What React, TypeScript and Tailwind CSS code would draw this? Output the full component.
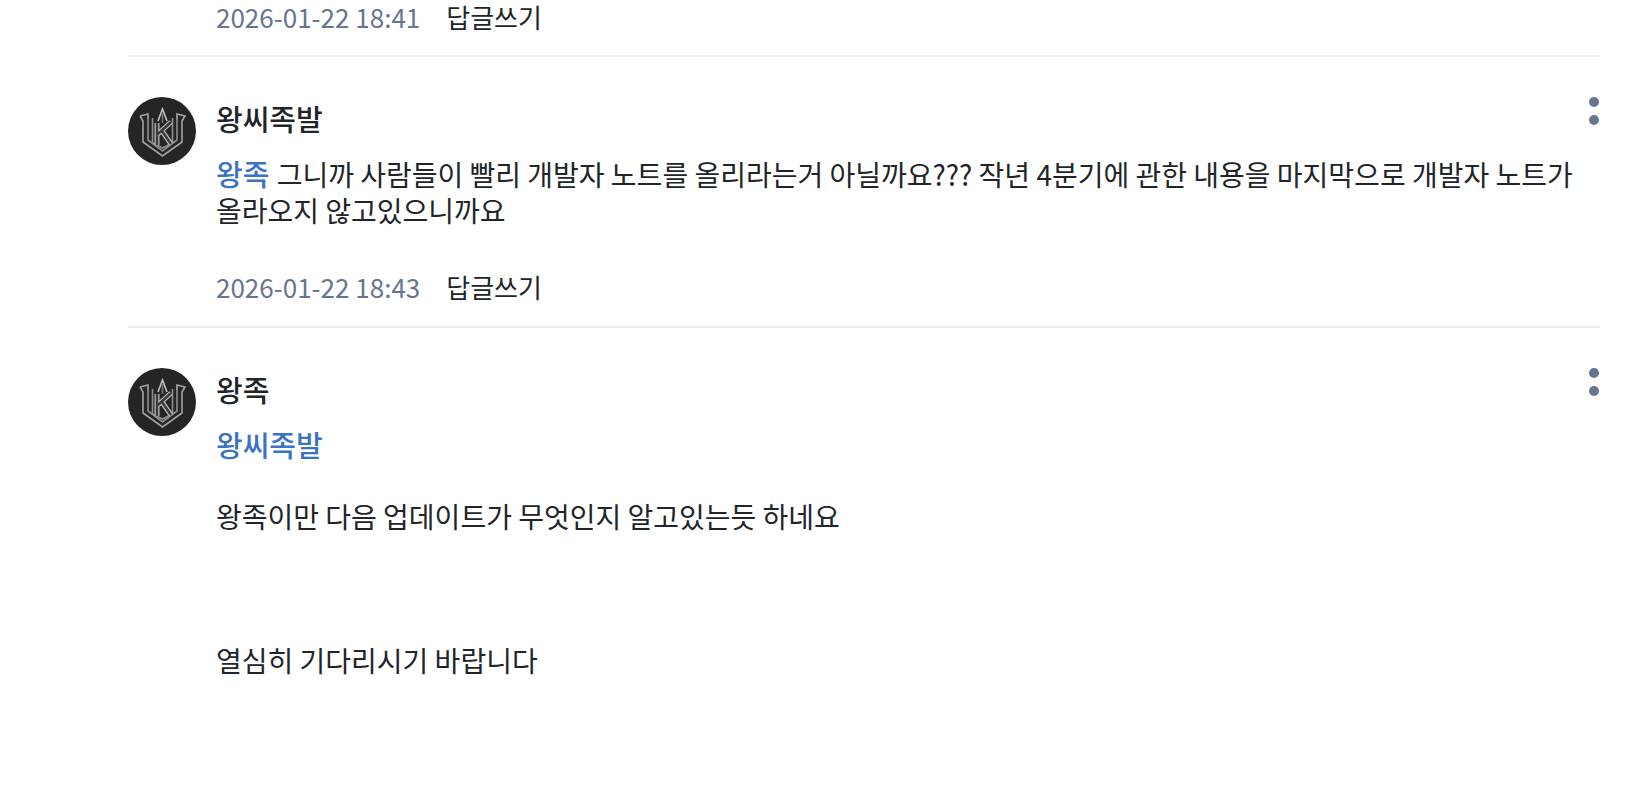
const K_STROKES = "M29 26 V48 M30 37 L43 25 M34 34 L43 47";

const Avatar = () => (
  <div className="flex h-[68px] w-[68px] shrink-0 items-center justify-center rounded-full bg-[#262525]">
    <svg viewBox="0 0 68 68" className="h-[68px] w-[68px]" fill="none" stroke="#a3a3a3" strokeWidth="1.6" aria-hidden>
      <path d="M12 19 L20 17 V22 M12 19 L15 24 V45 L34.5 59 L54 45 V24 L57 19 L49 17 V22" />
      <path d="M20 20 V43 L34.5 54 L49 43 V20" stroke="#8f8f8f" />
      <path d="M24.5 21 V46 L34.5 51 L44.5 46 V21" stroke="#8f8f8f" />
      <path d="M30 24 L34.5 12 L39 24" stroke="#c4c4c4" />
      <path d="M34.5 16 V26" stroke="#777777" />
      <path d={K_STROKES} stroke="#b8b8b8" strokeWidth="5" />
      <path d={K_STROKES} stroke="#3a3a3a" strokeWidth="2.4" />
    </svg>
  </div>
);

const Kebab = () => (
  <div className="flex flex-col gap-[8px] pr-[1px]">
    <span className="h-[10px] w-[10px] rounded-full bg-[#667591]" />
    <span className="h-[10px] w-[10px] rounded-full bg-[#667591]" />
  </div>
);

const Mention = ({ children }: { children: string }) => (
  <span className="mr-[1px] text-[29px] font-medium leading-none text-[#3a73c4]">{children}</span>
);

function Meta({ date }: { date: string }) {
  return (
    <div className="flex items-center gap-[26px] text-[26px] leading-[34px]">
      <span className="text-[#667591]">{date}</span>
      <span className="text-[#212529]">답글쓰기</span>
    </div>
  );
}

export default function App() {
  return (
    <div className="h-[810px] w-[1640px] overflow-hidden bg-white pl-[128px] pr-[40px] font-['Noto_Sans_CJK_KR','Noto_Sans',sans-serif] text-[#212529]">
      <div className="h-[57px] border-b-2 border-[#eeeeee] pl-[88px]">
        <Meta date="2026-01-22 18:41" />
      </div>

      <div className="flex h-[271px] gap-[20px] border-b-2 border-[#eeeeee] pt-[40px]">
        <Avatar />
        <div className="min-w-0 flex-1">
          <div className="flex items-start justify-between">
            <p className="text-[29px] font-medium leading-[42px]">왕씨족발</p>
            <Kebab />
          </div>
          <p className="mt-[17px] text-[28px] leading-[36px]">
            <Mention>왕족</Mention> 그니까 사람들이 빨리 개발자 노트를 올리라는거 아닐까요??? 작년 4분기에 관한 내용을 마지막으로 개발자 노트가 올라오지 않고있으니까요
          </p>
          <div className="mt-[42px]">
            <Meta date="2026-01-22 18:43" />
          </div>
        </div>
      </div>

      <div className="flex gap-[20px] pt-[40px]">
        <Avatar />
        <div className="min-w-0 flex-1">
          <div className="flex items-start justify-between">
            <p className="text-[29px] font-medium leading-[42px]">왕족</p>
            <Kebab />
          </div>
          <p className="mt-[17px] text-[28px] leading-[36px]">
            <Mention>왕씨족발</Mention>
          </p>
          <p className="mt-[35px] text-[28px] leading-[36px]">왕족이만 다음 업데이트가 무엇인지 알고있는듯 하네요</p>
          <p className="mt-[108px] text-[28px] leading-[36px]">열심히 기다리시기 바랍니다</p>
        </div>
      </div>
    </div>
  );
}
